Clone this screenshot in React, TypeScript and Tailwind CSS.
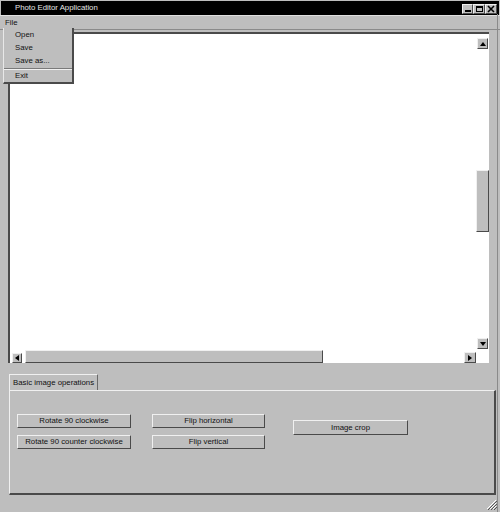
import React from "react";

const bevel = "border border-t-[#f0f0f0] border-l-[#f0f0f0] border-r-[#4a4a4a] border-b-[#4a4a4a]";

function Arrow({ dir }: { dir: "up" | "down" | "left" | "right" }) {
  const pts: Record<string, string> = {
    up: "1,6 4,2 7,6",
    down: "1,2 4,6 7,2",
    left: "6,1 2,4 6,7",
    right: "2,1 6,4 2,7",
  };
  return (
    <svg width="8" height="8" viewBox="0 0 8 8">
      <polygon points={pts[dir]} fill="#000" />
    </svg>
  );
}

function ArrowButton({ dir, className }: { dir: "up" | "down" | "left" | "right"; className: string }) {
  return (
    <div className={`flex items-center justify-center bg-[#bebebe] ${bevel} ${className}`}>
      <Arrow dir={dir} />
    </div>
  );
}

function Btn({ label, className = "" }: { label: string; className?: string }) {
  return (
    <div className={`flex items-center justify-center bg-[#bebebe] ${bevel} ${className}`}>
      {label}
    </div>
  );
}

export default function App() {
  return (
    <div className="w-[500px] h-[512px] bg-[#bebebe] relative overflow-hidden flex flex-col text-[7.8px] leading-none text-[#111] font-['Liberation_Sans',Arial,sans-serif]">
      {/* title bar */}
      <div className="h-[14px] mt-px mx-px bg-black flex items-center pl-[14px] text-[#e6e6e6] shrink-0">
        <span>Photo Editor Application</span>
        <div className="ml-auto flex items-center mr-[2px] mt-[2px]">
          <div className={`w-[11px] h-[10px] bg-[#bebebe] ${bevel} flex items-end justify-center pb-[1px]`}>
            <div className="w-[6px] h-[2px] bg-black" />
          </div>
          <div className={`w-[12px] h-[10px] bg-[#bebebe] ${bevel} flex items-center justify-center`}>
            <div className="w-[7px] h-[6px] border border-black border-t-2" />
          </div>
          <div className={`w-[12px] h-[10px] bg-[#bebebe] ${bevel} flex items-center justify-center`}>
            <svg width="8" height="8" viewBox="0 0 8 8">
              <path d="M1 1 L7 7 M7 1 L1 7" stroke="#000" strokeWidth="1.6" />
            </svg>
          </div>
        </div>
      </div>

      {/* menu bar */}
      <div className="h-[15px] flex items-center pl-[5px] border-b border-b-[#8a8a8a] border-t border-t-[#e0e0e0] shrink-0">
        File
      </div>

      {/* scroll pane */}
      <div className="mt-[2px] ml-[8px] w-[481px] h-[331px] border-t-2 border-l-2 border-t-[#4a4a4a] border-l-[#4a4a4a] bg-white flex flex-col shrink-0">
        <div className="flex flex-1 min-h-0">
          <div className="flex-1" />
          <div className="w-[13px] flex flex-col items-center">
            <ArrowButton dir="up" className="w-[11px] h-[11px] mt-[4px]" />
            <div className={`w-[13px] h-[62px] mt-[121px] bg-[#bebebe] ${bevel}`} />
            <div className="flex-1" />
            <ArrowButton dir="down" className="w-[11px] h-[11px] mb-px" />
          </div>
        </div>
        <div className="h-[13px] flex items-end pr-[13px]">
          <ArrowButton dir="left" className="w-[10px] h-[10px] ml-[2px]" />
          <div className={`w-[298px] h-[13px] ml-[3px] bg-[#bebebe] ${bevel}`} />
          <div className="flex-1" />
          <ArrowButton dir="right" className="w-[12px] h-[11px]" />
        </div>
      </div>

      {/* tabs */}
      <div className="mt-[11px] ml-[9px] w-[487px] flex flex-col shrink-0">
        <div className="h-[16px] w-[89px] flex items-center pl-[3px] border-t border-l border-t-[#f0f0f0] border-l-[#f0f0f0] border-r border-r-[#6a6a6a]">
          Basic image operations
        </div>
        <div className="h-[105px] border-t border-l border-t-[#f0f0f0] border-l-[#f0f0f0] border-r-2 border-b-2 border-r-[#4a4a4a] border-b-[#4a4a4a] flex items-start pl-[7px] pt-[23px]">
          <div className="flex flex-col gap-[7px]">
            <Btn label="Rotate 90 clockwise" className="w-[114px] h-[14px]" />
            <Btn label="Rotate 90 counter clockwise" className="w-[114px] h-[14px]" />
          </div>
          <div className="flex flex-col gap-[7px] ml-[21px]">
            <Btn label="Flip horizontal" className="w-[113px] h-[14px]" />
            <Btn label="Flip vertical" className="w-[113px] h-[14px]" />
          </div>
          <Btn label="Image crop" className="w-[115px] h-[15px] ml-[28px] mt-[6px]" />
        </div>
      </div>

      {/* resize grip */}
      <div className="flex-1 flex items-end justify-end pr-[3px] pb-[2px]">
        <svg width="12" height="12" viewBox="0 0 12 12">
          <path d="M11 2 L2 11 M11 5 L5 11 M11 8 L8 11" stroke="#ffffff" strokeWidth="1" />
          <path d="M12 3 L3 12 M12 6 L6 12 M12 9 L9 12" stroke="#555" strokeWidth="1" />
        </svg>
      </div>

      {/* right window edge */}
      <div className="absolute top-[14px] right-[2px] bottom-0 w-px bg-[#8a8a8a]" />

      {/* open File menu */}
      <div className="absolute left-[3px] top-[28px] w-[71px] bg-[#bebebe] border-l border-l-[#e8e8e8] border-r-2 border-b-2 border-r-[#4a4a4a] border-b-[#4a4a4a] flex flex-col">
        <div className="h-[13px] flex items-center pl-[11px]">Open</div>
        <div className="h-[13px] flex items-center pl-[11px]">Save</div>
        <div className="h-[13px] flex items-center pl-[11px]">Save as...</div>
        <div className="h-px bg-[#7a7a7a] mt-px" />
        <div className="h-px bg-[#f0f0f0]" />
        <div className="h-[12px] flex items-center pl-[11px]">Exit</div>
      </div>
    </div>
  );
}
